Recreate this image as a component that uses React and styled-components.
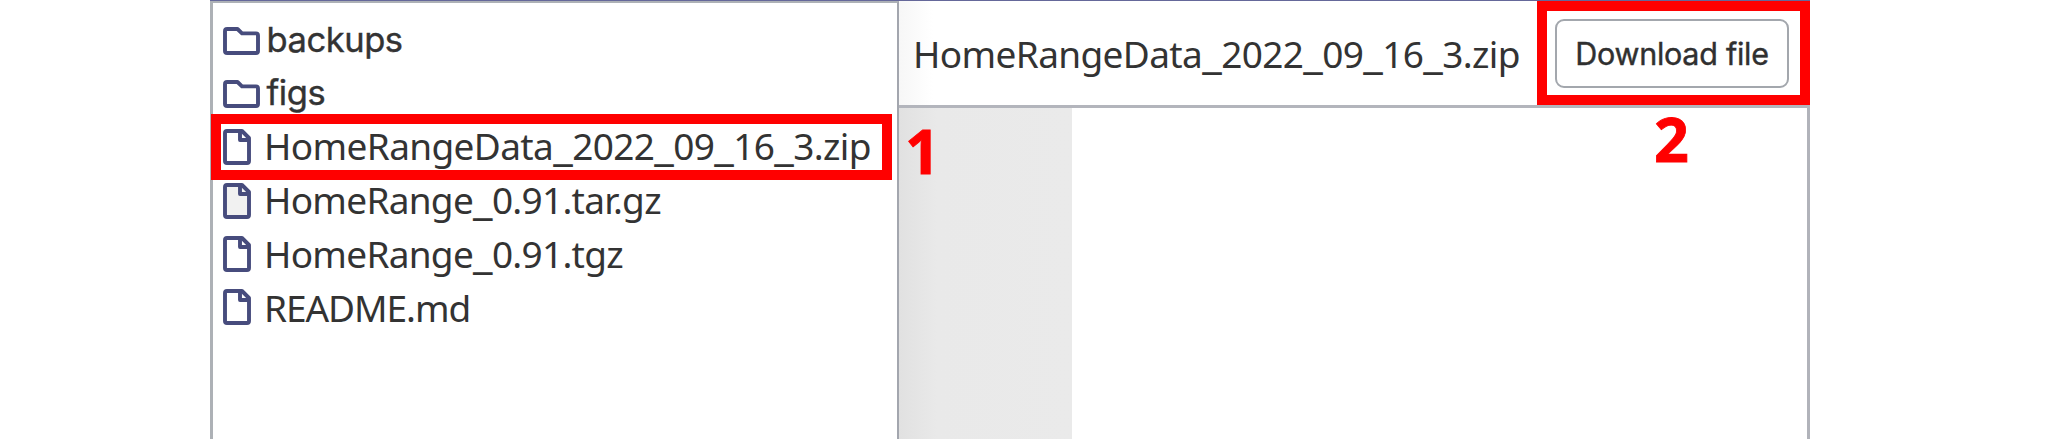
import React from 'react';
import styled, { createGlobalStyle } from 'styled-components';

const Global = createGlobalStyle`
  *, *::before, *::after { box-sizing: border-box; }
  body { margin: 0; background: #fff; overflow: hidden; }
`;

const Page = styled.div`
  height: 439px;
  padding: 0 247px 0 210px;
  background: #fff;
`;

const Frame = styled.main`
  position: relative;
  display: flex;
  height: 100%;
  border-top: 1px solid #65689a;
`;

const Sidebar = styled.nav`
  width: 689px;
  padding-top: 11px;
  border: solid #adb1b6;
  border-width: 2px 2px 0 3px;
  border-right-color: #a3a6ae;
`;

const Row = styled.div`
  display: flex;
  align-items: center;
  height: 53.3px;
  padding-left: 10px;
`;

const IconSlot = styled.span`
  display: flex;
  flex: none;
  width: ${p => (p.$wide ? 43.5 : 41)}px;
`;

const Name = styled.span`
  font-family: ${p => (p.$ui ? 'Inter' : '"Noto Sans"')}, sans-serif;
  font-size: ${p => (p.$ui ? 34.5 : 37)}px;
  line-height: 44px;
  letter-spacing: ${p => p.$track || 0}px;
  color: #333;
  white-space: pre;
  -webkit-text-stroke: ${p => (p.$ui ? 0.4 : 0)}px #333;
  padding-top: ${p => Math.max(p.$drop || 0, 0)}px;
  padding-bottom: ${p => Math.max(-(p.$drop || 0), 0)}px;
`;

const Underscore = styled.span`
  font-size: 44px;
  line-height: 0;
`;

const Viewer = styled.section`
  flex: 1;
  display: flex;
  flex-direction: column;
  border-right: 3px solid #b1b3ba;
`;

const Header = styled.header`
  display: flex;
  align-items: flex-start;
  justify-content: space-between;
  height: 107px;
  margin-right: -3px;
  padding-left: 14px;
  border-bottom: 3px solid #b3b5bc;
  background: linear-gradient(90deg, #f7f7f7, #fff 34px);
`;

const Title = styled.div`
  display: flex;
  align-items: center;
  height: 104px;
  padding-top: 2px;
`;

const Highlight = styled.div`
  width: 273px;
  height: 104px;
  padding: 8px;
  border: 10px solid #f00;
`;

const Button = styled.button`
  display: block;
  width: 234px;
  height: 69px;
  margin: 0;
  padding: 0;
  border: 2px solid #a3a7ad;
  border-radius: 9px;
  background: #fff;
  color: #303030;
  font: 400 30.5px/64px Inter, sans-serif;
  letter-spacing: -0.27px;
  -webkit-text-stroke: 0.4px #303030;
  white-space: nowrap;
`;

const Gutter = styled.div`
  flex: 1;
  width: 173px;
  background: linear-gradient(90deg, #e1e1e1, #e9e9e9 38px, #eaeaea);
`;

const RowHighlight = styled.div`
  position: absolute;
  left: 1px;
  top: 113px;
  width: 681px;
  height: 66px;
  border: 10px solid #f00;
`;

const Step = styled.span`
  position: absolute;
  left: ${p => p.$x}px;
  top: ${p => p.$y}px;
  font: 700 61px/60px "Open Sans", sans-serif;
  -webkit-text-stroke: 0.8px #f00;
  color: #f00;
`;

const FolderIcon = () => (
  <svg width="37" height="28" viewBox="0 0 37 28" fill="none" stroke="#474c7d" strokeWidth="3.9" strokeLinejoin="round">
    <path d="M2 4.2Q2 2 4.2 2H14.5L19 6.4H33Q35 6.4 35 8.4V24Q35 26 33 26H4.2Q2 26 2 24Z" />
  </svg>
);

const FileIcon = ({ fill }) => (
  <svg width="28" height="36" viewBox="0 0 28 36" fill="none" stroke="#474c7d" strokeWidth="3.9" strokeLinejoin="round">
    <path fill={fill} d="M2 4Q2 2 4 2H19L26 9V32Q26 34 24 34H4Q2 34 2 32Z" />
    <path d="M17 2V11H26" />
  </svg>
);

const FileName = ({ children, ...rest }) => (
  <Name {...rest}>
    {children.split(/(_)/).map((part, i) => (part === '_' ? <Underscore key={i}>_</Underscore> : part))}
  </Name>
);

const entries = [
  { name: 'backups', folder: true, drop: -2, track: -0.45 },
  { name: 'figs', folder: true, drop: -2, track: -0.45 },
  { name: 'HomeRangeData_2022_09_16_3.zip', drop: -2, track: -0.63 },
  { name: 'HomeRange_0.91.tar.gz', fill: '#f1f1f1', drop: -1, track: -0.72 },
  { name: 'HomeRange_0.91.tgz', drop: 1, track: -0.72 },
  { name: 'README.md', drop: 2, track: -1.05 },
];

export default function App() {
  return (
    <Page>
      <Global />
      <Frame>
        <Sidebar>
          {entries.map(e => (
            <Row key={e.name}>
              <IconSlot $wide={e.folder}>{e.folder ? <FolderIcon /> : <FileIcon fill={e.fill} />}</IconSlot>
              <FileName $ui={e.folder} $drop={e.drop} $track={e.track}>{e.name}</FileName>
            </Row>
          ))}
        </Sidebar>
        <Viewer>
          <Header>
            <Title>
              <FileName $track={-0.63}>HomeRangeData_2022_09_16_3.zip</FileName>
            </Title>
            <Highlight>
              <Button>Download file</Button>
            </Highlight>
          </Header>
          <Gutter />
        </Viewer>
        <RowHighlight />
        <Step $x={695} $y={120}>1</Step>
        <Step $x={1444} $y={108}>2</Step>
      </Frame>
    </Page>
  );
}
